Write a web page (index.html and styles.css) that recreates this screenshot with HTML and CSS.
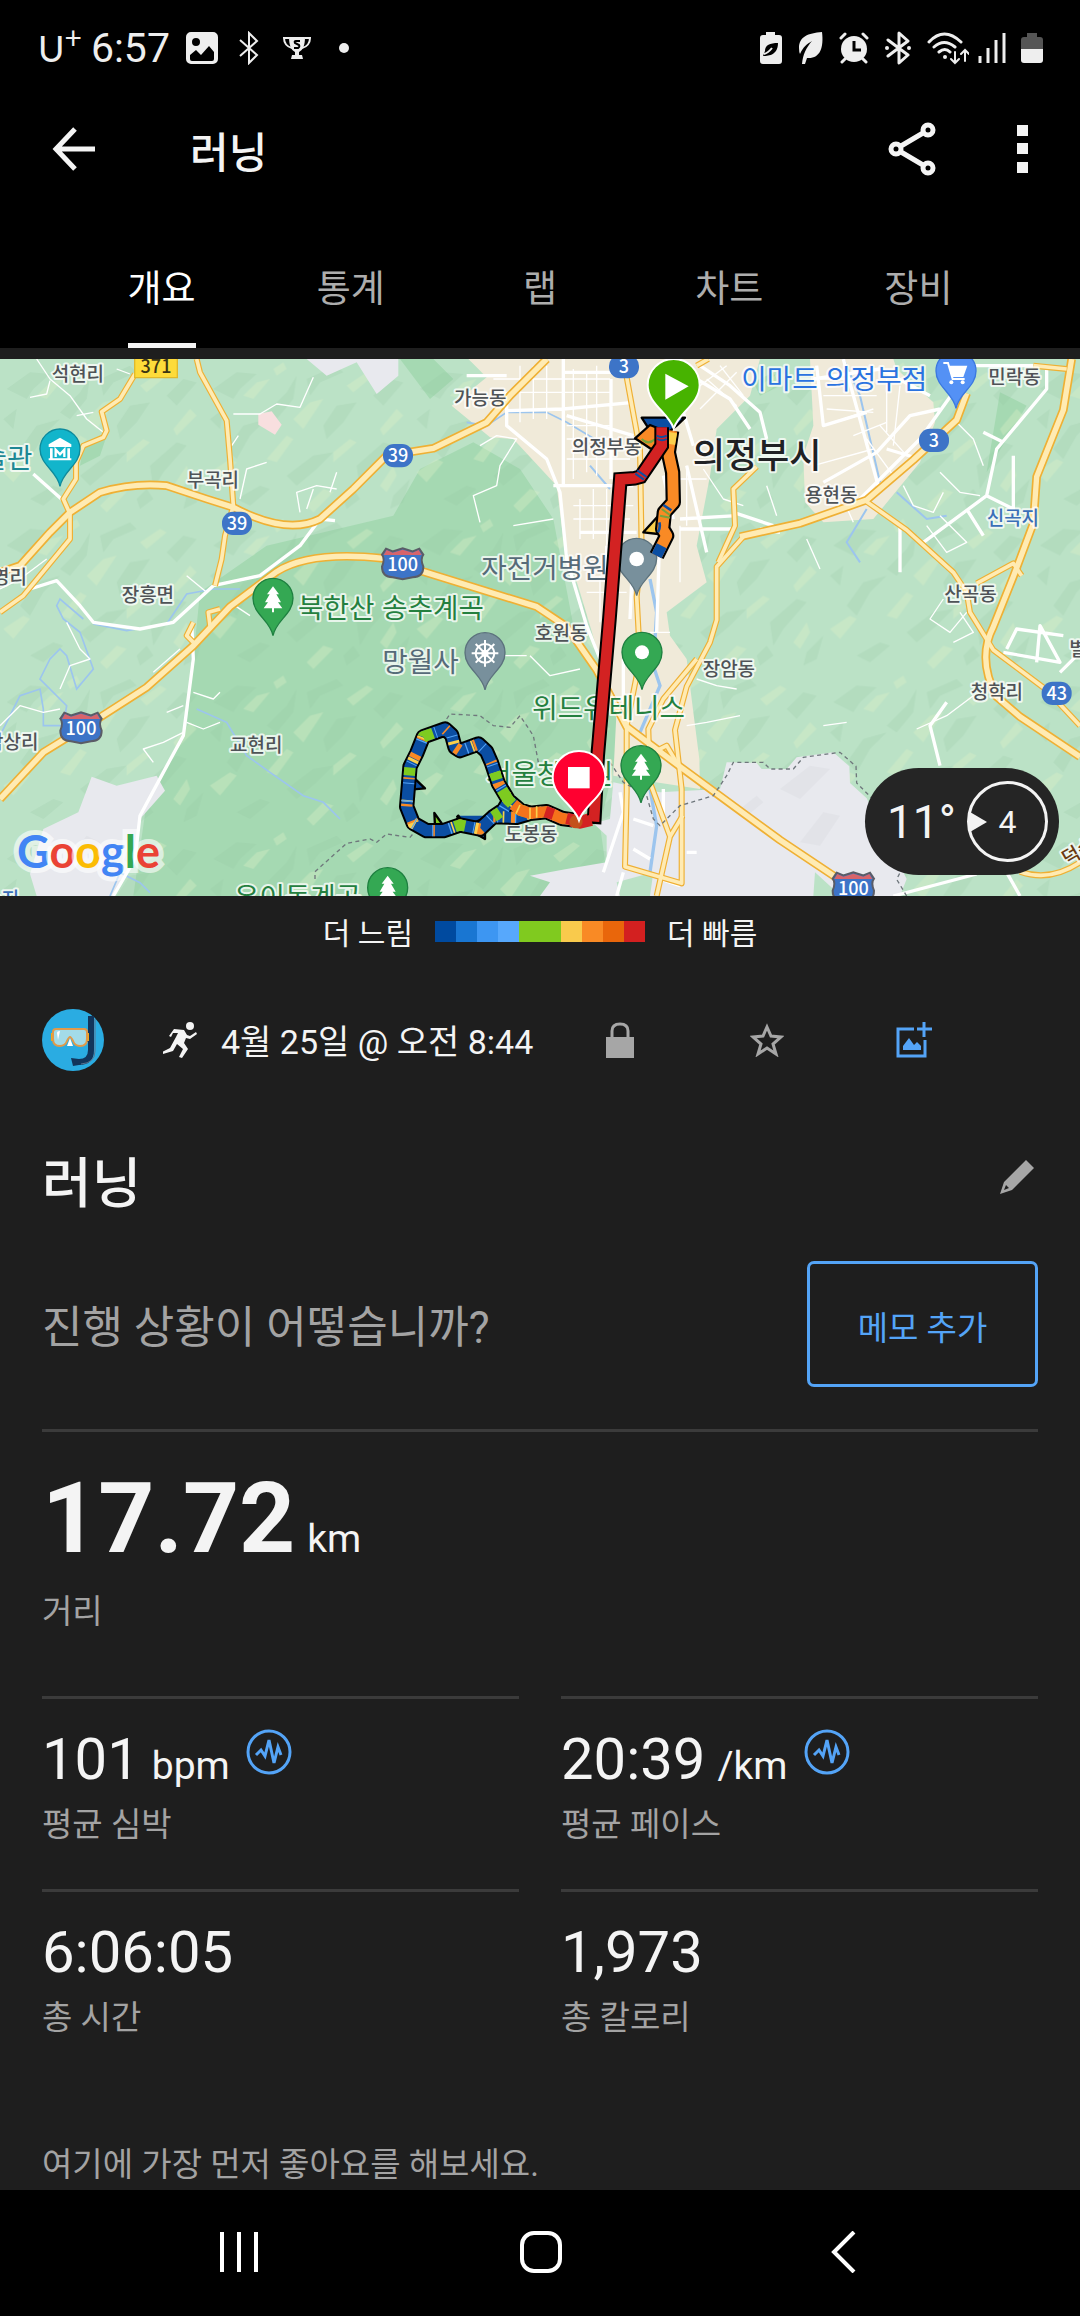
FILE: index.html
```html
<!DOCTYPE html>
<html lang="ko">
<head>
    <meta charset="UTF-8">
    <meta name="viewport" content="width=device-width, initial-scale=1">
    <title>러닝</title>
    <link rel="stylesheet" href="styles.css">
</head>
<body>

<div class="status-bar">
    <div class="status-left">
        <span class="carrier">U<sup>+</sup></span>
        <span class="clock">6:57</span>
        <svg class="st-image" width="32" height="32" viewBox="0 0 32 32">
            <path fill="#eee" fill-rule="evenodd" d="M5 0h22a5 5 0 0 1 5 5v22a5 5 0 0 1-5 5H5a5 5 0 0 1-5-5V5a5 5 0 0 1 5-5zM10 6a4 4 0 1 0 0 8a4 4 0 1 0 0-8zM4 23v4q0 2 2 2h20q2 0 2-2v-7l-5-6-8 9-5-5z"/>
        </svg>
        <svg class="st-bt" width="20" height="34" viewBox="0 0 20 34">
            <path fill="none" stroke="#eee" stroke-width="2" d="M1 9l17 15-8 8V2l8 8L1 25"/>
        </svg>
        <svg class="st-cup" width="28" height="24" viewBox="0 0 28 24">
            <path fill="#eee" d="M6 1h16c0 8-2 13-6 15v3h3l1 4H8l1-4h3v-3C8 14 6 9 6 1z"/>
            <path fill="none" stroke="#eee" stroke-width="2" d="M6 2H1c0 5 3 9 8 10M22 2h5c0 5-3 9-8 10"/>
            <path fill="none" stroke="#000" stroke-width="2" d="M17 5h-4q-2 0-1 2l4 2q1 2-1 3h-4"/>
        </svg>
        <span class="more-dot"></span>
    </div>
    <div class="status-right">
        <svg width="24" height="34" viewBox="0 0 24 34">
            <path fill="#eee" d="M7 1h9v3h4q3 0 3 3v23q0 3-3 3H4q-3 0-3-3V7q0-3 3-3h3z"/>
            <path fill="#000" d="M19 12c-8 0-13 2-13 8l-2 5c4 0 15 0 15-13z"/>
            <path fill="none" stroke="#eee" stroke-width="2" d="M5 23q4-1 8-6"/>
        </svg>
        <svg width="26" height="34" viewBox="0 0 26 34">
            <path fill="#eee" d="M24 1C10 2 1 6 1 17q0 4 1 6C5 16 9 13 14 10C8 17 5 23 4 33h3l2-6C22 28 26 17 24 1z"/>
        </svg>
        <svg width="30" height="34" viewBox="0 0 30 34">
            <circle cx="15" cy="18" r="13" fill="#eee"/>
            <path stroke="#eee" stroke-width="3" stroke-linecap="round" d="M2 7l4-4M28 7l-4-4M3 31l3-3M27 31l-3-3"/>
            <path fill="none" stroke="#000" stroke-width="3" d="M15 10v9h7"/>
        </svg>
        <svg width="28" height="34" viewBox="0 0 28 34">
            <path fill="none" stroke="#eee" stroke-width="3" stroke-linejoin="round" stroke-linecap="round" d="M4 9l20 15-9 8V2l9 8L4 25"/>
            <circle cx="3" cy="17" r="2" fill="#eee"/><circle cx="25" cy="17" r="2" fill="#eee"/>
        </svg>
        <svg width="42" height="34" viewBox="0 0 42 34">
            <g fill="none" stroke="#eee" stroke-width="3" stroke-linecap="round">
                <path d="M2 11Q17-5 34 11M7 16q10-9 21 0M12 21q6-5 11 0"/>
                <path stroke-width="2" d="M28 21v11M24 28l4 4 4-4M38 30V19M34 23l4-4 4 4"/>
            </g>
            <circle cx="18" cy="26" r="2" fill="#eee"/>
        </svg>
        <svg width="28" height="34" viewBox="0 0 28 34">
            <path stroke="#eee" stroke-width="3" d="M2 25v7M10 17v15M18 9v23M26 2v30"/>
        </svg>
        <svg class="st-battery" width="22" height="34" viewBox="0 0 22 34">
            <path fill="#555" d="M6 2h10v4h3q3 0 3 3v9H0V9q0-3 3-3h3z"/>
            <path fill="#eee" d="M0 18h22v11q0 3-3 3H3q-3 0-3-3z"/>
        </svg>
    </div>
</div>

<header class="app-bar">
    <button type="button" class="icon-btn back" aria-label="뒤로">
        <svg width="44" height="44" viewBox="0 0 44 44"><path fill="none" stroke="#f4f4f4" stroke-width="5" d="M23 2L4 22l19 20M4 22h39"/></svg>
    </button>
    <h1>러닝</h1>
    <button type="button" class="icon-btn share" aria-label="공유">
        <svg width="48" height="54" viewBox="0 0 48 54">
            <g fill="none" stroke="#f4f4f4" stroke-width="5">
                <path d="M13 24L35 11M13 30l22 13"/>
                <circle cx="8" cy="27" r="5"/><circle cx="40" cy="8" r="5"/><circle cx="40" cy="46" r="5"/>
            </g>
        </svg>
    </button>
    <button type="button" class="icon-btn" aria-label="더 보기">
        <svg width="12" height="48" viewBox="0 0 12 48"><path fill="#f4f4f4" d="M0 0h11v11H0zM0 18h11v11H0zM0 37h11v11H0z"/></svg>
    </button>
</header>

<nav class="tabs">
    <a href="#overview" class="active">개요</a>
    <a href="#stats">통계</a>
    <a href="#laps">랩</a>
    <a href="#charts">차트</a>
    <a href="#gear">장비</a>
</nav>

<main id="overview">
    <div class="map">
        <svg class="map-canvas" viewBox="0 0 3240 1611">
            <defs>
                <!-- terrain relief, tiled -->
                <pattern id="relief" width="620" height="470" patternUnits="userSpaceOnUse">
                    <g fill="#8fc09c" opacity="0.2">
                        <path d="M20 90l70-50 60 5-50 45-20 30zM180 160l60-60 30-50-10 70-50 60zM300 60l90-40 20 20-70 30-30 40z"/>
                        <path d="M60 270l50-70 70-20-50 50-40 70zM350 200l40-60 60-10-40 60-50 50zM500 110l50-50 40 10-60 70z"/>
                        <path d="M240 350l80-60 60-10-50 50-60 50zM450 320l80-70 30 10-70 80-30 50zM90 420l70-40 30 10-60 50z"/>
                        <path d="M560 410l50-50-20 70-40 20zM10 180l40-30-10 60zM410 420l30-30 20 30-40 30z"/>
                    </g>
                    <g fill="#dcefc6" opacity="0.35">
                        <path d="M110 110l40-40 40-10-50 60zM260 180l50-50 40-10-60 90zM420 80l60-40 20 10-60 50z"/>
                        <path d="M10 340l60-40 20 10-50 60zM180 300l60-70 20 10-50 70zM380 280l50-40 20 10-70 60z"/>
                        <path d="M520 210l50-60 20 20-60 60zM300 440l50-50 30 10-60 60zM520 380l40-60 10 30-30 50zM200 30l30-20 10 20-30 20z"/>
                    </g>
                </pattern>
                <g id="shield">
                    <path fill="#3d74c7" stroke="#5a5c66" stroke-width="6" d="M-50-44L-30-36 0-45 30-36 50-44 62-26Q52-14 62 10Q62 40 30 42L0 48-30 42Q-62 40-62 10Q-52-14-62-26z"/>
                    <path fill="#d7646b" d="M-48-40L-30-32 0-41 30-32 48-40 57-25H-57z"/>
                </g>
                <path id="pin" stroke-width="4" d="M0 112C-8 66-60 48-60 0a60 60 0 0 1 120 0C60 48 8 66 0 112z"/>
                <path id="tree" fill="#fff" d="M0-36L18-12H10L24 12H15L28 30H3V42H-3V30H-28L-15 12H-24L-10-12H-18z"/>
                <g id="roads">
                    <path d="M405 45L360 120 305 158 320 215 310 235 250 260 228 310V360L190 420 210 465V540L70 710 0 760"/>
                    <path d="M590 0L600 40 680 185 690 300 700 440 675 530 665 600 645 680"/>
                    <path d="M1870 0L1920 273 1925 573 1910 713 1920 900 1880 1100V1300L1875 1523 2045 1573V1290L2025 1113 2060 983 2130 850 2150 783V623L2230 533"/>
                    <path d="M1970 1611L2010 1433 1950 1270 1945 1110 1990 1020 2090 900M2010 1433L2048 1370M1960 1180L2000 1160 2030 1210"/>
                    <path d="M2270 323L2200 390 2205 500 2155 610M2090 20L2125 0M3100 20L3200 30"/>
                    <path d="M2600 428L2720 513 2860 640 2900 700 2910 760 2980 873 3140 993 3240 1100"/>
                    <path d="M2930 673L3040 613 3065 650M3060 1538Q3150 1570 3240 1510M580 850L560 830 580 790M630 800L625 760 660 750"/>
                </g>
                <g id="highways">
                    <path d="M0 640L60 620 150 520 210 460 300 400Q400 370 500 380L620 420 700 445Q860 530 960 480L1060 390 1160 290 1300 268 1460 190 1530 110 1640 0"/>
                    <path d="M0 1320L130 1180 300 1075 440 985 580 860 690 743 830 638Q930 575 1150 598L1270 638 1610 743 1700 803 1790 933 1880 1103 2040 1223 2340 1443 2560 1590"/>
                    <path d="M2220 533L2400 493 2600 423 2740 303 2870 183 2900 103"/>
                    <path d="M3215 0L3190 153 3110 353 3100 493 3040 653 2980 803Q2930 900 2990 1013L3060 1073 3240 1193"/>
                </g>
                <path id="loop" d="M1720 1383L1685 1378 1640 1358 1590 1363 1560 1353 1525 1323 1495 1273 1475 1213 1460 1178 1435 1155 1380 1175 1365 1165 1355 1128 1335 1110 1270 1133 1250 1183 1230 1223 1225 1283 1220 1343 1240 1393 1280 1415 1330 1415 1380 1398 1440 1410 1480 1373 1510 1353 1525 1328M1480 1373L1550 1375 1590 1363"/>
                <path id="climb" d="M2015 215L2005 280 2018 340 2020 430 1993 460 1988 510 2000 530 1985 560 1970 590"/>
            </defs>

            <rect width="3240" height="1611" fill="#bbe2c6"/>
            <path fill="#a5d9b2" d="M600 700L800 560 1180 470 1260 330 1420 250 1560 330 1660 480 1720 800 1860 1100 1850 1180 1800 1400 1830 1611H400L440 1330 560 1100zM1290 120L1360 60 1300 0H1200z"/>
            <path fill="#a5d9b2" d="M2260 70l60-30 20 40-60 30zM1620 200l40-10v90l-40-20zM3000 100l80 40-120 200zM250 260l70-30-20 60-60 30z"/>
            <rect width="3240" height="1611" fill="url(#relief)"/>
            <!-- built-up areas -->
            <path fill="#f0ead9" d="M1405 0L1460 55 1355 140 1470 235 1540 240 1670 380 1690 540 1740 700 1800 900 1850 1050 1840 1250 2100 1290 2098 1200 2080 1060 2060 900 2010 830 2000 760 2120 670 2090 560 2130 350 2150 210 2250 110 2280 0z"/>
            <path fill="#f0ead9" d="M2430 0L2440 200 2410 290 2415 430 2470 490 2620 480 2760 310 2805 190 2800 130 2690 30 2680 0z"/>
            <path fill="#e8e9ee" d="M920 0L980 50 1070 10 1130 105 1195 50V0zM275 1253L350 1280 470 1250 495 1295 420 1380 410 1500 340 1611H110L90 1545 130 1410 235 1360z"/>
            <path fill="#e8e9ee" d="M2180 1210L2270 1212 2285 1230 2360 1230 2390 1195 2500 1180 2548 1222 2550 1272 2600 1318 2720 1560 2700 1611H1620L1650 1570 1590 1550 1700 1530 1820 1510V1430L1780 1393 1830 1380 1840 1270 1980 1300 2160 1290z"/>
            <path fill="#bbe2c6" d="M2445 1540L2500 1590V1611H2440zM1850 1570L1960 1540 1950 1611H1860z"/>
            <path fill="#dddfe4" opacity="0.6" d="M2340 1290l90-70 60 10-90 90zM2400 1450l70-90 50 10-60 90zM200 1500l60-70 40 20-60 60zM2220 1350l50-40 20 20-60 50z"/>
            <path fill="#f8dfdf" d="M775 165l40-8 30 40-20 30-50-30z"/>

            <g class="water">
                <path d="M0 1130l60-120 60-20 10 60 0 50 60 0 10-60-80-80 30-60 30-30 20 20 30 100 50-60-40-110-50-40-20-40 10-20 70 60M330 1611l30-70 60 30 30 30"/>
                <path d="M280 795l100 20 120-20 60-90 80-15 80 0M590 1050l90 40 60 100 70 50 100 70 60 20 50 50M1400 190l60 10 60-40 120 0 60 30 100 60"/>
                <path d="M2530 0l50 110 60 260M2690 400l90 80 60-10M2600 450l-60 100 40 60M1770 320l60 70" stroke-width="6"/>
                <path d="M1950 660l20 100-10 160 20 60-60 140M1950 1290l20 110-20 140" stroke-width="10"/>
            </g>

            <g class="streets-thin">
                <path d="M110 0l40 60 60 50 50 70 50 40M90 115l50-10 10-40M230 170l50-10M700 165l80 0 50-30 70 10 40-90M695 260l20-30M720 420l20-90 60-20M900 460l-10-60 60-20 60 10M920 450l20-60M990 400l20-60M350 30l40 15"/>
                <path d="M0 1100l60-60 70 20 50-10M200 790l40 80 30 30-60 20-30 70M580 1000l60 20 20-20M560 1090l50 20 50-20M550 1120l-60 30-60 20 30 40M500 1060l50-20M460 940l80-70M0 690l60-30 80-60M560 650l60 50M690 730l60 40"/>
                <path d="M1440 260l50-30 60 10-50 80-10 60-70 30 20 80M1540 500l120-20M1590 890l60 60 90-20M1580 890l-120 0M2090 960l60 20 60 10M2060 1100l60-10 100-20M2520 400l40 90M2470 1100l70-10"/>
                <path d="M2710 380l30 60 60 20 30-60M2820 340l60 60 60 10M2860 180l60 60 30 80M2780 500l60 80 60-30-80-80M2830 720l-40 60 60 40 50-60M2860 850l60-30-40-60M2110 330l60 90 60 20M2300 380l30 90M2420 540l40 90M2750 1110l90-40 80-60"/>
                <path d="M1480 60h350M1500 100h330M1560 20v170M1600 20v160M1640 20v160M1720 30v330M1760 40v300M1790 20v330M1700 200h130M1700 240h130M1700 300h190M1720 440h180M1720 480h170M1740 420v120M1780 390v150M1820 390v170M1860 390v180M1760 700h120M1800 650v140M1950 820h60M2040 500v170M2060 320v180M2030 360h90"/>
                <path d="M2120 60l90 80M2160 20l70 90M2100 150l110-110M2060 110l120-90M2460 60h150M2470 110h160M2480 150l140 10M2500 190l120-40M2560 230l100-40M2660 60v160M2700 80l-20 180M2440 320l180-50M2600 240l80 110M2640 200l80 90"/>
            </g>
            <g class="streets">
                <path d="M90 690L170 665 240 740 280 790 420 810 520 790 640 680 780 650 900 560 960 480 1005 485M575 790L580 900 550 1130 490 1240 420 1370 405 1500 340 1611M100 345l90 80"/>
                <path d="M1520 100V200L1640 300 1680 400 1700 600 1760 800 1800 900M1690 0V380M1520 155L1690 150 1900 130M1660 380H1900M1833 60V360M1400 50h120M1700 170l200 60M1690 40h170M1740 520h170M1820 560v100"/>
                <path d="M2040 30l150 90 60 90M2100 20l90 60 90 80 20 80M2020 60l60 200M2060 320l60 260M2040 480l170-10M2040 510h160M2200 460l120 40M2340 520l-60-10"/>
                <path d="M2450 20l20 180 130-40M2530 0L2640 400M2440 60l200-30 150 80M2470 370l160-90 100-110 90-20M2560 440l200-200 100-140M2660 270l100 30M2900 20h200M3140 30v60L2990 270 2960 410 2770 550M2960 410l80 40V290M2900 450l50 80M2700 500v140M2950 220l60 30"/>
                <path d="M1990 350l30 130M1980 500l-10 320M1900 560l-10 220M1870 900v160M1860 1300l10 60-60 180M1900 1380l60 20M1990 1290v100M1900 1470l50 30M1870 1540l-20 71M1980 1560l60 20M2060 1480h30"/>
                <path d="M2820 1220L2790 1100 2840 1030M2680 1611L2930 1545M3020 1540l40 71M3020 870l30-60 140 20M3010 880l170 30-60-110-10 110M3240 880l-60 60"/>
            </g>

            <g class="casing"><use href="#roads" stroke-width="18"/><use href="#highways" stroke-width="26"/></g>
            <g class="paving"><use href="#roads" stroke-width="11"/><use href="#highways" stroke-width="16"/></g>
            <path class="border" d="M1340 1080L1350 1065 1440 1070 1480 1100 1530 1105 1560 1070 1600 1130 1615 1210M945 1560V1538L1040 1453 1110 1440 1130 1450 1160 1425 1230 1435 1260 1400M1830 1210l40 60 70 40 20 70 20 20 60-60 100-30 40-60 20-40 90 0 20 20h70l30-35 110-15 48 42 2 50 50 50M2720 1611l-30-50 20-40"/>

            <g class="shields">
                <path fill="#fddb3a" stroke="#e0b92c" stroke-width="4" d="M404-10H532V56H404z"/>
                <text x="468" y="42" class="dark">371</text>
                <rect x="666" y="458" width="90" height="70" rx="33"/><text x="711" y="512">39</text>
                <rect x="1149" y="255" width="90" height="70" rx="33"/><text x="1194" y="309">39</text>
                <rect x="1827" y="-12" width="90" height="70" rx="33"/><text x="1872" y="42">3</text>
                <rect x="2757" y="209" width="90" height="70" rx="33"/><text x="2802" y="264">3</text>
                <rect x="3125" y="968" width="90" height="70" rx="33"/><text x="3170" y="1022">43</text>
                <use href="#shield" x="1208" y="613"/><text x="1208" y="637">100</text>
                <use href="#shield" x="243" y="1105"/><text x="243" y="1129">100</text>
                <use href="#shield" x="2560" y="1585"/><text x="2560" y="1609">100</text>
            </g>

            <g class="towns">
                <text x="155" y="65">석현리</text>
                <text x="560" y="384">부곡리</text>
                <text x="365" y="729">장흥면</text>
                <text x="-24" y="676">영리</text>
                <text x="-42" y="1170">삼상리</text>
                <text x="690" y="1180">교현리</text>
                <text x="1362" y="137">가능동</text>
                <text x="1715" y="285">의정부동</text>
                <text x="1605" y="843">호원동</text>
                <text x="2108" y="951">장암동</text>
                <text x="1515" y="1447">도봉동</text>
                <text x="2965" y="76">민락동</text>
                <text x="2415" y="430">용현동</text>
                <text x="2833" y="725">산곡동</text>
                <text x="2912" y="1020">청학리</text>
                <text x="3208" y="891">별내</text>
                <text x="2960" y="497" class="lake">신곡지</text>
                <text x="-100" y="1640" class="lake">저수지</text>
                <text x="3200" y="1520" class="route-name" transform="rotate(-30 3200 1520)">덕송</text>
            </g>
            <g class="places">
                <text x="-132" y="327" class="teal">미술관</text>
                <text x="894" y="776" class="park">북한산 송추계곡</text>
                <text x="1597" y="1078" class="park">위드유테니스</text>
                <text x="1458" y="1275" class="park">서울창포원</text>
                <text x="702" y="1645" class="park">우이동계곡</text>
                <text x="1444" y="656" class="poi">자전거병원</text>
                <text x="1147" y="940" class="poi">망월사</text>
                <text x="2224" y="91" class="shop">이마트 의정부점</text>
                <text x="2078" y="328" class="city">의정부시</text>
            </g>

            <g class="pins">
                <use href="#pin" x="180" y="270" fill="#12b5cb" stroke="#0d8a9c"/>
                <path fill="#fff" d="M180 236l34 20v8h-68v-8zM150 268h8v30h-8zM202 268h8v30h-8zM146 298h68v6h-68z"/>
                <path fill="none" stroke="#fff" stroke-width="7" d="M167 294v-22l13 14 13-14v22"/>
                <use href="#pin" x="819" y="718" fill="#34a853" stroke="#1e8040"/><use href="#tree" x="819" y="718"/>
                <use href="#pin" x="1910" y="598" fill="#78909c" stroke="#5c727d"/><circle cx="1910" cy="600" r="22" fill="#fff"/>
                <use href="#pin" x="1455" y="881" fill="#78909c" stroke="#5c727d"/>
                <g fill="none" stroke="#fff" stroke-width="6">
                    <circle cx="1455" cy="883" r="28"/><circle cx="1455" cy="883" r="8"/>
                    <path d="M1455 843v80M1415 883h80M1427 855l56 56M1483 855l-56 56"/>
                </g>
                <use href="#pin" x="1926" y="880" fill="#34a853" stroke="#1e8040"/><circle cx="1926" cy="880" r="21" fill="#fff"/>
                <use href="#pin" x="1923" y="1220" fill="#34a853" stroke="#1e8040"/><use href="#tree" x="1923" y="1220"/>
                <use href="#pin" x="1163" y="1586" fill="#34a853" stroke="#1e8040"/><use href="#tree" x="1163" y="1586"/>
                <use href="#pin" x="2868" y="36" fill="#5491f5" stroke="#3b78e0"/>
                <path fill="#fff" d="M2846 20h56l-12 34h-34z"/>
                <path fill="none" stroke="#fff" stroke-width="6" d="M2830 12h14l14 48h36"/>
                <circle cx="2854" cy="70" r="6" fill="#fff"/><circle cx="2888" cy="70" r="6" fill="#fff"/>
            </g>

            <!-- recorded track, coloured by pace -->
            <g class="track">
                <path fill="#0b4ea2" stroke="#000" stroke-width="7" d="M1925 176H2055L2030 200 1980 240 1950 215z"/>
                <path fill="#fbd04c" stroke="#000" stroke-width="7" d="M1930 520L1975 470V525z"/>
                <path fill="#f98a25" stroke="#000" stroke-width="7" d="M1905 238L1950 198 1980 210V270L1950 268z"/>
                <path fill="#0b4ea2" stroke="#000" stroke-width="7" d="M1235 1250L1275 1288 1230 1292zM1370 1370L1400 1400 1460 1375 1500 1370M1420 1420L1455 1440V1400z"/>
                <path fill="#7ecb20" stroke="#000" stroke-width="7" d="M1303 1362L1330 1400H1305zM1375 1370L1395 1400H1365z"/>
                <use href="#climb" stroke="#000" stroke-width="46"/>
                <use href="#climb" stroke="#f98a25" stroke-width="33"/>
                <path stroke="#fbd04c" stroke-width="33" d="M2015 220L2009 255"/>
                <path stroke="#0b4ea2" stroke-width="33" d="M1985 560L1970 590"/>
                <path stroke="#77a33c" stroke-width="6" d="M1985 450l25 18M1980 470l30 6M1925 240q20 20 40 0"/>
                <path stroke="#0b4ea2" stroke-width="8" d="M1990 438l24 16M1978 490q4 16 -4 30"/>
                <use href="#loop" stroke="#000" stroke-width="46"/>
                <use href="#loop" stroke="#0b4ea2" stroke-width="34"/>
                <use href="#loop" stroke="#f98a25" stroke-width="34" stroke-dasharray="7 46 14 60 5 75"/>
                <use href="#loop" stroke="#fbd04c" stroke-width="34" stroke-dasharray="0 28 5 66 9 89"/>
                <use href="#loop" stroke="#54a4f7" stroke-width="34" stroke-dasharray="0 12 3 50 4 70 3 46"/>
                <use href="#loop" stroke="#7ecb20" stroke-width="34" stroke-dasharray="0 150 32 100 24 130"/>
                <path stroke="#7ecb20" stroke-width="34" d="M1506 1292L1525 1323 1536 1334"/>
                <path stroke="#f5731b" stroke-width="34" d="M1720 1383L1685 1378 1640 1358 1590 1363 1560 1353 1540 1336"/>
                <path stroke="#d32222" stroke-width="34" d="M1660 1366L1636 1358M1780 1376L1740 1388 1700 1378"/>
                <path stroke="#fbd04c" stroke-width="5" d="M1590 1346v34M1560 1338l-12 26M1610 1342v34"/>
                <path class="sharp" stroke="#000" stroke-width="44" d="M1985 205L1985 260 1922 353 1904 358 1861 361 1828 783 1793 1190 1782 1395"/>
                <path class="sharp" stroke="#d32222" stroke-width="32" d="M1985 205L1985 260 1922 353 1904 358 1861 361 1828 783 1793 1190 1782 1388"/>
                <path stroke="#d32222" stroke-width="34" d="M1775 1384L1740 1392 1712 1386"/>
                <path stroke="#0b4ea2" stroke-width="6" d="M1970 230q14 8 30 0M1972 240q14 8 28 0M1912 334l28 20M1906 344l26 18"/>
                <circle cx="1728" cy="1388" r="20" fill="#c4501a"/>
            </g>
            <path fill="#47b300" stroke="#fff" stroke-width="6" d="M2021 208C2005 160 1943 135 1943 78a78 78 0 0 1 156 0C2099 135 2037 160 2021 208z"/>
            <path fill="#fff" d="M1996 44l70 38-70 40z"/>
            <path fill="#ff0030" stroke="#fff" stroke-width="6" d="M1737 1384C1721 1336 1658 1312 1658 1255a79 79 0 0 1 158 0C1816 1312 1753 1336 1737 1384z"/>
            <path fill="#fff" d="M1704 1224h65v64h-65z"/>
        </svg>

        <div class="google"><span class="b">G</span><span class="r">o</span><span class="y">o</span><span class="b">g</span><span class="g">l</span><span class="r">e</span></div>

        <div class="weather">
            <span class="temp">11°</span>
            <span class="wind">4</span>
        </div>
    </div>

    <div class="legend">
        <span class="legend-label">더 느림</span>
        <span class="scale"><i class="s1"></i><i class="s2"></i><i class="s3"></i><i class="s4"></i><i class="s5"></i><i class="s5"></i><i class="s6"></i><i class="s7"></i><i class="s8"></i><i class="s9"></i></span>
        <span class="legend-label">더 빠름</span>
    </div>

    <div class="content">
        <div class="meta">
            <svg class="avatar" width="62" height="62" viewBox="0 0 62 62">
                <circle cx="31" cy="31" r="31" fill="#2aace2"/>
                <path fill="none" stroke="#12355b" stroke-width="6" d="M49 7v34q0 12-12 12h-5"/>
                <path fill="none" stroke="#5a7591" stroke-width="1" d="M53 10v32q0 12-14 13"/>
                <path fill="#12355b" d="M29 49l8 1v6l-6 1z"/>
                <path fill="none" stroke="#12355b" stroke-width="2" d="M44 24h8M44 32h8"/>
                <path fill="#f2a71b" d="M9 24h4v8H9zM43 24h4v8h-4z"/>
                <path fill="#a3dbe8" stroke="#e09a4a" stroke-width="2" d="M14 20h28q3 0 3 3v7q0 7-7 7-5 0-7-5-2-4-3-4t-3 4q-2 5-7 5-7 0-7-7v-7q0-3 3-3z"/>
                <path fill="#fff" d="M15 24q0-2 3-2l-2 9zM28 29l3 8h-6z"/>
            </svg>
            <svg class="runner" width="34" height="36" viewBox="0 0 34 36">
                <circle cx="27" cy="4" r="4" fill="#f4f4f4"/>
                <path fill="#f4f4f4" d="M11 7l10 1 3 5 3 1 6-4 1 2-7 5-4-1-2 5 4 6-6 9-3-1 4-8-6-5-4 7-10 3-1-2 8-4 6-11 2-4-5 0-2 4-2-1z"/>
            </svg>
            <span class="date">4월 25일 @ 오전 8:44</span>
            <button type="button" class="icon-btn action" aria-label="비공개">
                <svg width="30" height="36" viewBox="0 0 30 36">
                    <path fill="#a6a6a6" d="M1 15h28v21H1z"/>
                    <path fill="none" stroke="#a6a6a6" stroke-width="3" d="M7 16V9q0-7 8-7t8 7v7"/>
                </svg>
            </button>
            <button type="button" class="icon-btn action" aria-label="즐겨찾기">
                <svg width="34" height="34" viewBox="0 0 34 34"><path fill="none" stroke="#a6a6a6" stroke-width="3" d="M17 4l4 9 10 1-8 7 3 10-9-6-9 6 3-10-8-7 10-1z"/></svg>
            </button>
            <button type="button" class="icon-btn action" aria-label="사진 추가">
                <svg width="36" height="36" viewBox="0 0 36 36">
                    <path fill="none" stroke="#54a4f7" stroke-width="3" d="M18 7H2v27h27V18M28 0v15M21 7h15"/>
                    <path fill="#54a4f7" d="M7 28v-4l6-8 5 7 3-3 4 4v4z"/>
                </svg>
            </button>
        </div>

        <div class="title-row">
            <h2>러닝</h2>
            <button type="button" class="icon-btn edit" aria-label="이름 편집">
                <svg width="36" height="36" viewBox="0 0 36 36">
                    <path fill="#a6a6a6" d="M27 1l8 8-22 22L1 35l4-12zM5 31l5-2-3-3z"/>
                </svg>
            </button>
        </div>

        <div class="note-row">
            <p>진행 상황이 어떻습니까?</p>
            <button type="button" class="add-note">메모 추가</button>
        </div>

        <section class="stat distance">
            <div class="value"><b>17.72</b> <small>km</small></div>
            <div class="name">거리</div>
        </section>

        <div class="stats-grid">
            <section class="stat">
                <div class="value">101 <small>bpm</small>
                    <svg class="pulse" width="46" height="46" viewBox="0 0 46 46"><circle cx="23" cy="23" r="21"/><path d="M10 26l5-5 4 6 4-16 5 23 4-16 3 8"/></svg>
                </div>
                <div class="name">평균 심박</div>
            </section>
            <section class="stat">
                <div class="value">20:39 <small>/km</small>
                    <svg class="pulse" width="46" height="46" viewBox="0 0 46 46"><circle cx="23" cy="23" r="21"/><path d="M10 26l5-5 4 6 4-16 5 23 4-16 3 8"/></svg>
                </div>
                <div class="name">평균 페이스</div>
            </section>
            <section class="stat">
                <div class="value">6:06:05</div>
                <div class="name">총 시간</div>
            </section>
            <section class="stat">
                <div class="value">1,973</div>
                <div class="name">총 칼로리</div>
            </section>
        </div>

        <p class="likes">여기에 가장 먼저 좋아요를 해보세요.</p>
    </div>
</main>

<div class="nav-bar">
    <button type="button" class="icon-btn" aria-label="최근 앱">
        <svg width="42" height="42" viewBox="0 0 42 42"><path stroke="#fff" stroke-width="4" d="M4 1v40M21 1v40M38 1v40"/></svg>
    </button>
    <button type="button" class="icon-btn" aria-label="홈">
        <svg width="42" height="42" viewBox="0 0 42 42"><rect x="2" y="2" width="38" height="38" rx="12" fill="none" stroke="#fff" stroke-width="4"/></svg>
    </button>
    <button type="button" class="icon-btn" aria-label="뒤로 가기">
        <svg width="42" height="42" viewBox="0 0 42 42"><path fill="none" stroke="#fff" stroke-width="4" d="M32 1L12 21l20 20"/></svg>
    </button>
</div>

</body>
</html>
```
FILE: styles.css
```css
* {
    box-sizing: border-box;
}
body {
    margin: 0;
    min-height: 100vh;
    display: flex;
    flex-direction: column;
    background-color: #1e1e1e;
    color: #f4f4f4;
    font-family: Roboto, "Noto Sans CJK KR", sans-serif;
}
h1, h2, p {
    margin: 0;
}
svg {
    display: block;
    flex-shrink: 0;
}
.icon-btn {
    display: flex;
    align-items: center;
    justify-content: center;
    padding: 0;
    border: none;
    background: none;
    cursor: pointer;
}

/* status bar */
.status-bar {
    display: flex;
    justify-content: space-between;
    align-items: center;
    height: 96px;
    padding: 0 37px 0 38px;
    background-color: #000;
    color: #eee;
}
.status-left, .status-right {
    display: flex;
    align-items: center;
}
.carrier {
    font-family: Lato, sans-serif;
    font-size: 36px;
    line-height: 48px;
}
.carrier sup {
    font-size: 30px;
    line-height: 0;
}
.clock {
    margin-left: 9px;
    font-size: 41px;
    line-height: 48px;
}
.st-image {
    margin-left: 16px;
}
.st-bt {
    margin-left: 21px;
}
.st-cup {
    margin-left: 24px;
}
.more-dot {
    width: 10px;
    height: 10px;
    margin-left: 28px;
    border-radius: 50%;
    background-color: #eee;
}
.status-right {
    gap: 15px;
}
.status-right svg:nth-child(6) {
    margin-left: -6px;
}

/* app bar and tabs */
.app-bar {
    display: flex;
    align-items: center;
    height: 106px;
    padding: 0 51px 0 52px;
    background-color: #000;
}
.app-bar h1 {
    flex: 1;
    margin-left: 94px;
    padding-top: 9px;
    font-size: 42px;
    font-weight: 500;
    line-height: 60px;
}
.share {
    margin-right: 81px;
}
.tabs {
    display: flex;
    justify-content: center;
    height: 146px;
    padding: 0 67px;
    margin-bottom: 11px;
    background-color: #000;
}
.tabs a {
    flex: 1;
    display: flex;
    flex-direction: column;
    align-items: center;
    justify-content: space-between;
    padding-top: 64px;
    color: #adadad;
    font-size: 37px;
    line-height: 48px;
    text-decoration: none;
}
.tabs .active {
    color: #fff;
}
.tabs .active::after {
    content: "";
    width: 68px;
    height: 5px;
    background-color: #f4f4f4;
}

/* map */
.map {
    position: relative;
    overflow: hidden;
}
.map-canvas {
    width: 100%;
    height: auto;
    font-family: "Noto Sans CJK KR", sans-serif;
}
.water {
    fill: none;
    stroke: #9cc5ee;
    stroke-width: 5;
}
.streets, .streets-thin {
    fill: none;
    stroke: #fff;
    stroke-width: 10;
    stroke-linejoin: round;
}
.streets-thin {
    stroke-width: 4;
}
.casing, .paving {
    fill: none;
    stroke: #efb034;
    stroke-linejoin: round;
}
.paving {
    stroke: #ffebb3;
}
.border {
    fill: none;
    stroke: #6f777c;
    stroke-width: 4;
    stroke-dasharray: 12 10;
}
.shields rect {
    fill: #3d74c7;
}
.shields text {
    fill: #fff;
    font-size: 54px;
    font-weight: 500;
    text-anchor: middle;
}
.shields .dark {
    fill: #3c3512;
}
.towns text, .places text {
    fill: #4f5357;
    font-size: 57px;
    font-weight: 500;
    stroke: #fff;
    stroke-opacity: 0.75;
    stroke-width: 12;
    stroke-linejoin: round;
    paint-order: stroke;
}
.towns .lake {
    fill: #3a6fb8;
}
.towns .route-name {
    fill: #6b3a10;
}
.places text {
    font-size: 83px;
    font-weight: 400;
}
.places .teal {
    fill: #1d8794;
}
.places .park {
    fill: #24803f;
}
.places .poi {
    fill: #566b78;
}
.places .shop {
    fill: #2a73e0;
}
.places .city {
    fill: #202124;
    font-size: 105px;
    font-weight: 500;
}
.track path, .track use {
    stroke-linejoin: round;
}
.track .sharp {
    stroke-linejoin: miter;
}
.track use, .track path:not([fill]) {
    fill: none;
}
.google {
    position: absolute;
    left: 17px;
    bottom: 17px;
    font-family: Lato, sans-serif;
    font-size: 45px;
    font-weight: 700;
    line-height: 56px;
    -webkit-text-stroke: 10px rgba(255, 255, 255, 0.6);
    paint-order: stroke fill;
}
.google .b {
    color: #4285f4;
}
.google .r {
    color: #ea4335;
}
.google .y {
    color: #fbbc04;
}
.google .g {
    color: #34a853;
}
.weather {
    position: absolute;
    right: 21px;
    bottom: 21px;
    display: flex;
    align-items: center;
    justify-content: space-between;
    width: 194px;
    height: 107px;
    padding: 0 11px 0 22px;
    border-radius: 54px;
    background-color: #252525;
}
.temp {
    font-size: 46px;
}
.wind {
    position: relative;
    width: 81px;
    height: 81px;
    border: 3px solid #f4f4f4;
    border-radius: 50%;
    font-size: 32px;
    line-height: 77px;
    text-align: center;
}
.wind::before {
    content: "";
    position: absolute;
    left: 0;
    top: 28px;
    border: 10px solid transparent;
    border-left: 17px solid #f4f4f4;
    border-right: none;
}

/* pace legend */
.legend {
    display: flex;
    align-items: center;
    justify-content: center;
    gap: 22px;
    padding-top: 11px;
    font-size: 30px;
    line-height: 44px;
}
.legend-label {
    padding-top: 5px;
}
.scale {
    display: flex;
}
.scale i {
    width: 21px;
    height: 21px;
}
.s1 { background-color: #004a9f; }
.s2 { background-color: #1976d2; }
.s3 { background-color: #3d96f2; }
.s4 { background-color: #57a8fc; }
.s5 { background-color: #80ca1f; }
.s6 { background-color: #f9ca4c; }
.s7 { background-color: #f98a25; }
.s8 { background-color: #e9660b; }
.s9 { background-color: #d32020; }

/* activity details */
.content {
    padding: 0 42px;
}
.meta {
    display: flex;
    align-items: center;
    margin-top: 53px;
}
.runner {
    margin-left: 59px;
}
.date {
    margin: 0 13px 0 24px;
    padding-top: 3px;
    font-size: 34px;
    line-height: 48px;
    white-space: nowrap;
}
.action {
    width: 147px;
    height: 62px;
}
.title-row, .note-row {
    display: flex;
    align-items: center;
    justify-content: space-between;
}
.title-row {
    align-items: flex-start;
    margin-top: 74px;
    padding-right: 3px;
}
.title-row h2 {
    font-size: 54px;
    font-weight: 500;
    line-height: 80px;
}
.edit {
    height: 64px;
}
.note-row {
    margin: 36px 0 42px;
}
.note-row p {
    padding-top: 7px;
    color: #a3a3a3;
    font-size: 44px;
    line-height: 60px;
}
.add-note {
    width: 231px;
    height: 126px;
    padding-top: 4px;
    border: 3px solid #54a4f7;
    border-radius: 7px;
    background: none;
    color: #54a4f7;
    font-family: inherit;
    font-size: 33px;
    cursor: pointer;
}
.stat {
    border-top: 3px solid #3b3b3b;
    padding: 26px 0 42px;
}
.stat .value {
    display: flex;
    align-items: baseline;
    gap: 12px;
    height: 68px;
    font-size: 58px;
    line-height: 68px;
}
.stat small {
    font-size: 39px;
}
.stat .name {
    margin-top: 10px;
    color: #a3a3a3;
    font-size: 33px;
    line-height: 44px;
}
.distance {
    padding-bottom: 62px;
}
.distance .value {
    height: 122px;
    font-size: 98px;
    line-height: 122px;
}
.stats-grid {
    display: grid;
    grid-template-columns: 1fr 1fr;
    column-gap: 42px;
}
.pulse {
    align-self: flex-start;
    margin: 4px 0 0 4px;
    fill: none;
    stroke: #54a4f7;
    stroke-width: 3;
}
.likes {
    margin-top: 61px;
    color: #a3a3a3;
    font-size: 33px;
    line-height: 44px;
}

/* system navigation */
.nav-bar {
    display: flex;
    justify-content: space-around;
    align-items: center;
    height: 126px;
    margin-top: auto;
    padding: 0 86px 2px 88px;
    background-color: #000;
}
```
